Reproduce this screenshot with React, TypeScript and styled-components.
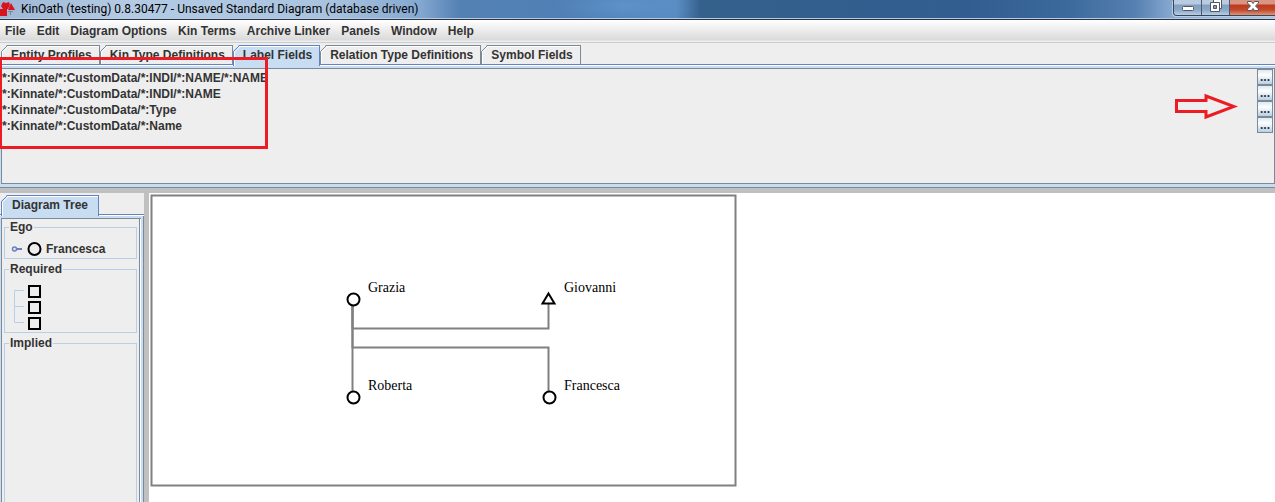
import React from "react";
import styled, { createGlobalStyle, css } from "styled-components";

const ui = '"Liberation Sans", Arial, sans-serif';

const GlobalStyle = createGlobalStyle`
  * { box-sizing: border-box; }
  html, body, #root { height: 100%; margin: 0; }
  body { overflow: hidden; background: #eee; color: #333; font: bold 12px/16px ${ui}; }
  button { font: inherit; color: inherit; margin: 0; padding: 0; border: 0; background: none; }
`;

const Window = styled.div`
  position: relative;
  display: flex;
  flex-direction: column;
  min-height: 100vh;
`;

const TitleBar = styled.header`
  display: flex;
  flex: none;
  align-items: flex-start;
  height: 20px;
  border-bottom: 1px solid #2b3245;
  box-shadow: inset 0 -1px #b4cbe2;
  background:
    radial-gradient(ellipse 70px 20px at 49% 30%, #5e92c8, transparent),
    linear-gradient(90deg, #9db7d5 0, #b5cbe4 10%, #a9c3df 26%, #83a8d0 33%, #5481b4 36%, #4d7fb5 48%, #5a8cc2 53%, #34608c 55%, #315d90 76%, #3d6a9d 84%, #5580b0 89%, #88aad2 92%, #a9c5e3 100%);
`;

const Title = styled.h1`
  flex: 1;
  margin: 0 0 0 5px;
  font: 12px/18px Roboto, "Segoe UI", sans-serif;
  color: #000;
  white-space: nowrap;
`;

const WindowButtons = styled.div`
  display: flex;
  height: 16px;
  overflow: hidden;
  border: solid #39465a;
  border-width: 0 0 1px 1px;
  border-radius: 0 0 0 4px;
  box-shadow: -1px 1px #b9cee4;
`;

const WindowButton = styled.button<{ $close?: boolean }>`
  display: flex;
  width: ${(p) => (p.$close ? 45 : 28)}px;
  height: 15px;
  justify-content: center;
  border-right: ${(p) => (p.$close ? 0 : 1)}px solid #4a5970;
  background: ${(p) =>
    p.$close
      ? "linear-gradient(#d99482 0 4px, #b93a20 5px, #c5472b 10px, #dc9678)"
      : "linear-gradient(#b9cbe0 0 4px, #849fbd 5px, #8ba8c8 10px, #b7cfe4)"};
`;

const MenuBar = styled.nav`
  display: flex;
  flex: none;
  gap: 11px;
  height: 23px;
  padding: 3px 5px 0;
  border-bottom: 1px solid #ccc;
  background: linear-gradient(#fff, #dadada 20px, #eee 21px);
`;

const MenuItem = styled.button`
  height: 16px;
`;

const TabList = styled.div`
  display: flex;
  flex: none;
  height: 23px;
  padding: 2px 0 0 1px;
  border-bottom: 1px solid #fff;
  box-shadow: inset 0 -1px #6382bf;
`;

const TabButton = styled.button<{ $active?: boolean; $roomy?: boolean }>`
  position: relative;
  height: ${(p) => (p.$active ? 21 : 19)}px;
  padding: 0 ${(p) => (p.$roomy ? 10 : 7)}px ${(p) => (p.$active ? 2 : 0)}px ${(p) => (p.$roomy ? 11 : 10)}px;
  border: 1px solid ${(p) => (p.$active ? "#6382bf" : "#7a8a99")};
  border-width: 1px 1px 0 0;
  background: ${(p) => (p.$active ? "#c8ddf2" : "#eee")};
  box-shadow: inset 0 1px #fff;
  white-space: nowrap;
`;

const TabCorner = styled.svg`
  position: absolute;
  left: 0;
  top: -1px;
`;

const LabelsPanel = styled.section`
  flex: none;
  height: 121px;
  margin-bottom: 6px;
  border: solid #c8ddf2;
  border-width: 2px 0 3px 1px;
  box-shadow: inset 0 1px #7a8a99, inset 1px 0 #7a8a99, inset -1px -1px #7a8a99, 0 1px #7a8a99, 0 6px #c0c0c0;
  padding: 1px 2px 0 1px;
`;

const FieldRow = styled.div`
  display: flex;
  justify-content: space-between;
  height: 16px;
  line-height: 18px;
`;

const MoreButton = styled.button`
  width: 16px;
  height: 16px;
  border: 1px solid #7a8a99;
  background: linear-gradient(#dde8f3, #fff 5px, #b8cfe5);
  line-height: 14px;
`;

const Workspace = styled.main`
  display: flex;
  flex: 1;
`;

const Sidebar = styled.aside`
  display: flex;
  flex: none;
  flex-direction: column;
  width: 144px;
`;

const TreePanel = styled.div`
  display: flex;
  flex: 1;
  flex-direction: column;
  gap: 2px;
  padding: 1px 4px 0 3px;
  border: solid #c8ddf2;
  border-width: 2px 2px 0 1px;
  margin-right: 1px;
  box-shadow: inset 0 1px #7a8a99, inset 1px 0 #7a8a99, inset -1px 0 #fff, inset -2px 0 #7a8a99, 1px 0 #7a8a99;
`;

const Group = styled.fieldset<{ $grow?: boolean }>`
  min-width: 0;
  margin: 0;
  padding: 0 0 0 4px;
  border: 1px solid #b8cfe5;
  ${(p) => p.$grow && css`flex: 1; border-bottom: 0;`}
`;

const GroupTitle = styled.legend`
  padding: 0 1px;
`;

const TreeItem = styled.div`
  display: flex;
  align-items: center;
  gap: 4px;
  height: 23px;
  padding-top: 4px;
`;

const TreeBranch = styled.svg`
  display: block;
`;

const Divider = styled.div`
  flex: none;
  width: 5px;
  background: #c0c0c0;
`;

const Canvas = styled.div`
  flex: 1;
  background: #fff;
`;

const Drawing = styled.svg`
  display: block;
  font: 14px "Liberation Serif", "Times New Roman", serif;
`;

const Annotation = styled.svg`
  position: absolute;
  pointer-events: none;
`;

const HighlightBox = styled(Annotation)`
  left: 0;
  top: 57px;
`;

const HighlightArrow = styled(Annotation)`
  right: 37px;
  top: 93px;
`;

function Tab({ label, active, roomy }: { label: string; active?: boolean; roomy?: boolean }) {
  return (
    <TabButton role="tab" aria-selected={!!active} $active={active} $roomy={roomy}>
      <TabCorner width="7" height={active ? 21 : 19}>
        <path d="M0 0H6L0 6Z" fill="#eee" />
        <path d="M6.500 .5L.5 6.500V21" fill="none" stroke={active ? "#6382bf" : "#7a8a99"} />
        <path d="M7 1.500L1.500 7V21" fill="none" stroke="#fff" />
      </TabCorner>
      {label}
    </TabButton>
  );
}

const menus = ["File", "Edit", "Diagram Options", "Kin Terms", "Archive Linker", "Panels", "Window", "Help"];
const tabs = ["Entity Profiles", "Kin Type Definitions", "Label Fields", "Relation Type Definitions", "Symbol Fields"];
const fields = [
  "*:Kinnate/*:CustomData/*:INDI/*:NAME/*:NAME",
  "*:Kinnate/*:CustomData/*:INDI/*:NAME",
  "*:Kinnate/*:CustomData/*:Type",
  "*:Kinnate/*:CustomData/*:Name",
];

export default function App() {
  return (
    <Window>
      <GlobalStyle />
      <TitleBar>
        <svg width="16" height="18" fill="#d9141e">
          <path d="M3 2L6 3L9 2L10 5L8 9H3L1 6ZM0 9H7V16H0Z" />
          <path d="M11 3L15 10H8Z" />
          <path d="M8 11.500H13M10.500 11V15" stroke="#7c8794" />
        </svg>
        <Title>KinOath (testing) 0.8.30477 - Unsaved Standard Diagram (database driven)</Title>
        <WindowButtons>
          <WindowButton aria-label="Minimize">
            <svg width="14" height="14"><rect x="1.500" y="6.500" width="11" height="4" rx="1" fill="#fff" stroke="#535666" /></svg>
          </WindowButton>
          <WindowButton aria-label="Restore">
            <svg width="14" height="14" fill="#fff" stroke="#535666">
              <path d="M4.500 -1V8.500H12.500V-1Z" />
              <path d="M1.500 2.500H10.500V11.500H1.500Z" />
              <path d="M4.500 5.500H7.500V8.500H4.500Z" fill="#849fbd" />
            </svg>
          </WindowButton>
          <WindowButton aria-label="Close" $close>
            <svg width="14" height="14">
              <path d="M1.500 1.500H5.500L7 3.500L8.500 1.500H12.500V3L9.500 6L12.500 9V10.500H8.500L7 8.500L5.500 10.500H1.500V9L4.500 6L1.500 3Z" fill="#fff" stroke="#535666" />
            </svg>
          </WindowButton>
        </WindowButtons>
      </TitleBar>
      <MenuBar>{menus.map((m) => <MenuItem key={m}>{m}</MenuItem>)}</MenuBar>
      <TabList role="tablist">
        {tabs.map((t) => <Tab key={t} label={t} active={t === "Label Fields"} />)}
      </TabList>
      <LabelsPanel>
        {fields.map((f) => (
          <FieldRow key={f}>{f}<MoreButton aria-label={"Options for " + f}>...</MoreButton></FieldRow>
        ))}
      </LabelsPanel>
      <Workspace>
        <Sidebar>
          <TabList role="tablist"><Tab label="Diagram Tree" active roomy /></TabList>
          <TreePanel>
            <Group>
              <GroupTitle>Ego</GroupTitle>
              <TreeItem>
                <svg width="33" height="16" fill="none">
                  <path d="M7 8H13" stroke="#6382bf" strokeWidth="2" />
                  <circle cx="5.500" cy="8" r="2" stroke="#6382bf" strokeWidth="1.500" />
                  <circle cx="25.500" cy="8" r="6" stroke="#000" strokeWidth="2" />
                </svg>
                Francesca
              </TreeItem>
            </Group>
            <Group>
              <GroupTitle>Required</GroupTitle>
              <TreeBranch width="40" height="55" fill="none">
                <path d="M15 13.500H5.500V45.500H15M5.500 29.500H15" stroke="#b8cfe5" />
                <path d="M20 9H31V20H20ZM20 25H31V36H20ZM20 41H31V52H20Z" stroke="#000" strokeWidth="2" />
              </TreeBranch>
            </Group>
            <Group $grow><GroupTitle>Implied</GroupTitle></Group>
          </TreePanel>
        </Sidebar>
        <Divider />
        <Canvas>
          <Drawing width="600" height="300" fill="#000">
            <rect x="2.500" y="2.500" width="584" height="290" fill="none" stroke="#808080" strokeWidth="2" />
            <g fill="none" stroke="#808080" strokeWidth="2">
              <path d="M203.500 107V135.500H399.500V107" />
              <path d="M203.500 107V154.500H399.500V203" />
              <path d="M203.500 107V203" />
            </g>
            <g fill="#fff" stroke="#000" strokeWidth="2">
              <circle cx="204.500" cy="106.500" r="6" />
              <circle cx="204.500" cy="204.500" r="6" />
              <circle cx="400.500" cy="204.500" r="6" />
              <path d="M399.500 100.500L405.500 110.500H393.500Z" />
            </g>
            <text x="219" y="99">Grazia</text>
            <text x="415" y="99">Giovanni</text>
            <text x="219" y="197">Roberta</text>
            <text x="415" y="197">Francesca</text>
          </Drawing>
        </Canvas>
      </Workspace>
      <HighlightBox width="269" height="93"><path d="M.5 1.500H266.500V90.500H.5Z" fill="none" stroke="#ed1c24" strokeWidth="3" /></HighlightBox>
      <HighlightArrow width="64" height="27"><path d="M2.500 7.500H32V3L60 13.500L32 24V18.500H2.500Z" fill="none" stroke="#ed1c24" strokeWidth="3" /></HighlightArrow>
    </Window>
  );
}
